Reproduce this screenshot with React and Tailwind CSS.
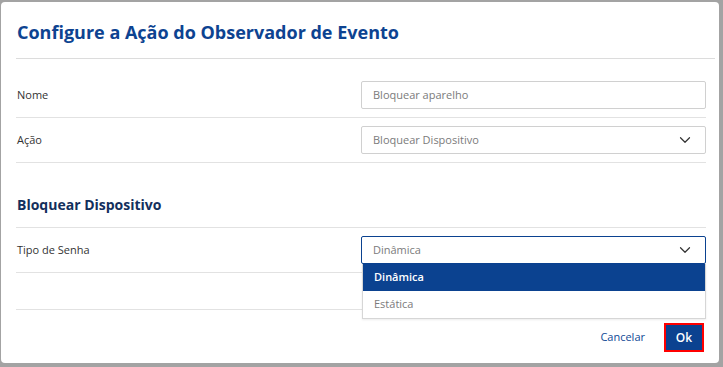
import { ChevronDown } from "lucide-react";

const font = { fontFamily: '"Open Sans", "Noto Sans", sans-serif' };

function Row({ label, children, first }) {
  return (
    <div className={`flex items-center border-b border-[#e2e2e2] pb-[8px] ${first ? "pt-[22px]" : "pt-[8px]"}`}>
      <div className="w-[345px] pl-[1px] text-[11px] text-[#333]">{label}</div>
      <div className="flex-1">{children}</div>
    </div>
  );
}

function Field({ value, select, focused }) {
  return (
    <div
      className={`flex h-[28px] items-center justify-between rounded-[2px] border pl-[11px] pr-[11px] text-[11px] text-[#7b7b7b] ${
        focused ? "border-[#0b4290]" : "border-[#d0d0d0]"
      }`}
    >
      <span>{value}</span>
      {select && <ChevronDown size={18} strokeWidth={1.6} className="text-[#333]" />}
    </div>
  );
}

export default function App() {
  return (
    <div className="h-[367px] w-[723px] overflow-hidden bg-[#a3a3a3] pl-[1px] pt-[2px]" style={font}>
      <div className="relative h-[361px] w-[718px] rounded-[4px] bg-white">
        <div className="pl-[15px] pr-[4px]">
          <h1 className="border-b border-[#dcdcdc] pb-[14px] pt-[18px] pl-[1px] text-[18px] font-bold leading-[24px] text-[#0d4391]">
            Configure a Ação do Observador de Evento
          </h1>
        </div>
        <div className="pl-[15px] pr-[13px]">
          <div className="pt-[14px]">
            <Row label="Nome">
              <Field value="Bloquear aparelho" />
            </Row>
            <Row label="Ação">
              <Field value="Bloquear Dispositivo" select />
            </Row>
          </div>
          <h2 className="border-b border-[#e2e2e2] pb-[13px] pl-[1px] pt-[33px] text-[14px] font-bold leading-[18px] text-[#132f5c]">
            Bloquear Dispositivo
          </h2>
          <div className="relative">
            <Row label="Tipo de Senha">
              <Field value="Dinâmica" select focused />
            </Row>
            <div className="h-[37px] border-b border-[#e2e2e2]" />
            <div className="absolute left-[346px] right-0 top-[36px] border border-t-0 border-[#d6d6d6] bg-white text-[11px] shadow-[0_1px_2px_rgba(0,0,0,0.08)]">
              <div className="flex h-[27px] items-center bg-[#0b4290] pl-[11px] font-semibold text-white">Dinâmica</div>
              <div className="flex h-[27px] items-center pl-[11px] text-[#7b7b7b]">Estática</div>
            </div>
          </div>
          <div className="flex items-center justify-end gap-[19px] pr-[2px] pt-[13px]">
            <button className="text-[11px] text-[#0f4a96]">Cancelar</button>
            <button className="h-[29px] w-[40px] border-2 border-[#ff0000] bg-[#0b4290] text-[12px] font-semibold text-white">
              Ok
            </button>
          </div>
        </div>
      </div>
    </div>
  );
}
